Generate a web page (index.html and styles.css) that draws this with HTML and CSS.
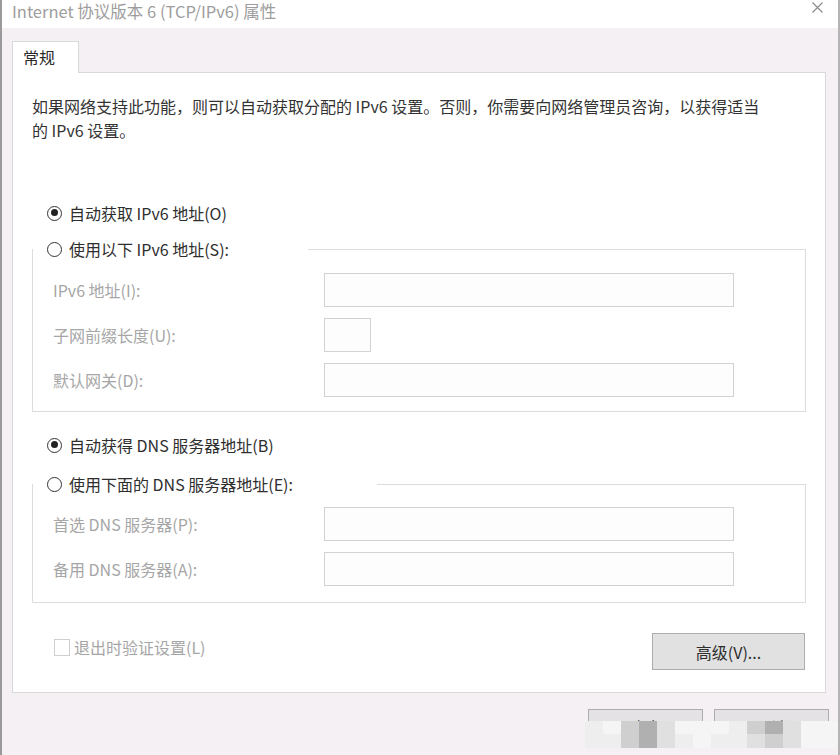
FILE: index.html
```html
<!DOCTYPE html>
<html lang="zh-CN">
<head>
  <meta charset="UTF-8">
  <meta name="viewport" content="width=device-width, initial-scale=1.0">
  <title>Internet 协议版本 6 (TCP/IPv6) 属性</title>
  <link rel="stylesheet" href="styles.css">
</head>
<body>
  <div class="window">
    <div class="titlebar">
      <span class="title">Internet 协议版本 6 (TCP/IPv6) 属性</span>
      <svg class="close" width="11" height="11" viewBox="0 0 11 11">
        <path d="M0.5 0.5 L10.5 10.5 M10.5 0.5 L0.5 10.5" stroke="#8a8a8a" stroke-width="1.1" fill="none"/>
      </svg>
    </div>

    <div class="dialog">
      <div class="tabs">
        <div class="tab">常规</div>
      </div>

      <div class="panel">
        <p class="intro">如果网络支持此功能，则可以自动获取分配的 IPv6 设置。否则，你需要向网络管理员咨询，以获得适当<br>的 IPv6 设置。</p>

        <!-- IPv6 address -->
        <div class="option first">
          <span class="radio checked"></span>自动获取 IPv6 地址(O)
        </div>
        <fieldset class="group">
          <legend class="legend-ip">
            <span class="radio"></span>使用以下 IPv6 地址(S):
          </legend>
          <div class="row">
            <span class="label">IPv6 地址(I):</span>
            <span class="box"></span>
          </div>
          <div class="row">
            <span class="label">子网前缀长度(U):</span>
            <span class="box small"></span>
          </div>
          <div class="row">
            <span class="label">默认网关(D):</span>
            <span class="box"></span>
          </div>
        </fieldset>

        <!-- DNS -->
        <div class="option second">
          <span class="radio checked"></span>自动获得 DNS 服务器地址(B)
        </div>
        <fieldset class="group dns">
          <legend class="legend-dns">
            <span class="radio"></span>使用下面的 DNS 服务器地址(E):
          </legend>
          <div class="row">
            <span class="label">首选 DNS 服务器(P):</span>
            <span class="box"></span>
          </div>
          <div class="row">
            <span class="label">备用 DNS 服务器(A):</span>
            <span class="box"></span>
          </div>
        </fieldset>

        <div class="panel-footer">
          <span class="check"><span class="checkbox"></span>退出时验证设置(L)</span>
          <button class="btn advanced">高级(V)...</button>
        </div>
      </div>

      <div class="actions">
        <button class="btn">确定</button>
        <button class="btn">取消</button>
      </div>
    </div>

    <!-- pixelated watermark over the bottom buttons -->
    <div class="mosaic">
      <span class="s1"></span><span class="s0"></span><span class="s3"></span><span class="s4"></span><span class="s2"></span><span class="s0"></span><span class="s0"></span><span class="s0"></span><span class="s1"></span><span class="s3"></span><span class="s4"></span><span class="s2"></span><span class="s0"></span><span class="s0"></span>
      <span class="s1"></span><span class="s1"></span><span class="s3"></span><span class="s4"></span><span class="s2"></span><span class="s1"></span><span class="s0"></span><span class="s1"></span><span class="s1"></span><span class="s2"></span><span class="s3"></span><span class="s2"></span><span class="s0"></span><span class="s0"></span>
    </div>
  </div>
</body>
</html>
```

FILE: styles.css
```css
body {
  margin: 0;
  font-family: "Noto Sans CJK SC", "Noto Sans", sans-serif;
  font-size: 16px;
  color: #2e2e2e;
}
.window {
  position: relative;
  width: 840px;
  height: 755px;
  box-sizing: border-box;
  border-left: 2px solid #9a9a9a;
  border-right: 2px solid #b4b4b4;
  background-color: #f4f0f3;
  overflow: hidden;
}
.titlebar {
  display: flex;
  justify-content: space-between;
  align-items: flex-start;
  height: 28px;
  box-sizing: border-box;
  padding: 0 15px 0 10px;
  background-color: #fff;
}
.title {
  line-height: 23px;
  font-size: 16.5px;
  color: #9d9d9d;
}
.close {
  margin-top: 2px;
}
.dialog {
  padding: 13px 0 0 10px;
}
.tabs {
  display: flex;
}
.tab {
  position: relative;
  z-index: 1;
  width: 67px;
  height: 32px;
  box-sizing: border-box;
  margin-bottom: -1px;
  padding-left: 10px;
  line-height: 30px;
  background-color: #fff;
  border: 1px solid #d9d9d9;
  border-bottom: none;
  color: #2a2a2a;
}
.panel {
  width: 814px;
  height: 621px;
  box-sizing: border-box;
  padding: 21px 19px 0 19px;
  background-color: #fff;
  border: 1px solid #d9d9d9;
}
.intro {
  margin: 0;
  line-height: 24px;
  color: #333;
}
.option {
  display: flex;
  align-items: center;
  height: 24px;
  line-height: 24px;
}
.option.first {
  margin-top: 59px;
}
.option.second {
  margin-top: 21px;
}
.radio {
  display: inline-block;
  width: 15px;
  height: 15px;
  box-sizing: border-box;
  margin: 0 7px 0 15px;
  border: 1.5px solid #333;
  border-radius: 50%;
  background-color: #fff;
  position: relative;
}
.radio.checked::after {
  content: "";
  position: absolute;
  left: 2.5px;
  top: 2.5px;
  width: 7px;
  height: 7px;
  border-radius: 50%;
  background-color: #222;
}
.group {
  width: 774px;
  box-sizing: border-box;
  margin: 12px 0 0 0;
  padding: 12px 0 14px 0;
  border: 1px solid #dcdcdc;
  min-inline-size: 0;
}
.group.dns {
  margin-top: 15px;
  padding-top: 11px;
  padding-bottom: 16px;
}
.group legend {
  display: flex;
  align-items: center;
  height: 24px;
  line-height: 24px;
  margin-left: 0;
  padding: 0;
  color: #2e2e2e;
}
.group legend .radio {
  margin-left: 14px;
}
.legend-ip {
  width: 275px;
}
.legend-dns {
  width: 344px;
}
.row {
  display: flex;
  align-items: center;
  height: 34px;
  padding-left: 20px;
}
.row + .row {
  margin-top: 11px;
}
.label {
  width: 271px;
  color: #a6a6a6;
}
.box {
  width: 410px;
  height: 34px;
  box-sizing: border-box;
  border: 1px solid #d2d2d2;
  background-color: #fdfdfd;
}
.box.small {
  width: 47px;
}
.panel-footer {
  display: flex;
  justify-content: space-between;
  align-items: flex-start;
  width: 774px;
  height: 37px;
  margin-top: 30px;
}
.check {
  display: flex;
  align-items: center;
  height: 24px;
  margin: 2px 0 0 22px;
  color: #a6a6a6;
}
.checkbox {
  width: 16px;
  height: 17px;
  box-sizing: border-box;
  margin-right: 4px;
  border: 1px solid #cfcfcf;
  background-color: #fff;
}
.btn {
  width: 115px;
  height: 36px;
  font-family: inherit;
  font-size: 16px;
  color: #2e2e2e;
  background-color: #e4e2e4;
  border: 1px solid #adadad;
  border-radius: 0;
  padding: 0;
}
.btn.advanced {
  width: 153px;
  height: 37px;
  margin-right: 1px;
  background-color: #e1e1e1;
}
.actions {
  display: flex;
  justify-content: flex-end;
  gap: 11px;
  margin-top: 16px;
  padding-right: 9px;
}
.mosaic {
  position: absolute;
  left: 583px;
  top: 721px;
  right: -2px;
  height: 27px;
  display: grid;
  grid-template-columns: repeat(13, 18px) 1fr;
  grid-template-rows: 13px 14px;
}
.mosaic .s0 { background-color: #f5f5f5; }
.mosaic .s1 { background-color: #eeeeee; }
.mosaic .s2 { background-color: #e0e0e0; }
.mosaic .s3 { background-color: #cfcfcf; }
.mosaic .s4 { background-color: #b0b0b0; }
```
